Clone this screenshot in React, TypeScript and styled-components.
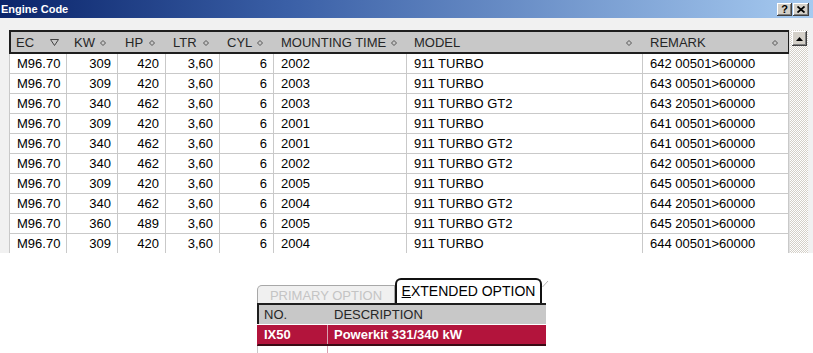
import React from 'react';
import styled, { createGlobalStyle } from 'styled-components';

const GlobalStyle = createGlobalStyle`
  html, body {
    margin: 0;
    padding: 0;
    background: #fff;
  }
  body {
    font-family: 'Liberation Sans', Arial, sans-serif;
    width: 813px;
    height: 353px;
    overflow: hidden;
  }
`;

type Col = { key: string; label: string; width: number; align: 'left' | 'right'; marker: number; sort?: boolean };

const columns: Col[] = [
  { key: 'ec', label: 'EC', width: 58, align: 'left', marker: 34, sort: true },
  { key: 'kw', label: 'KW', width: 51, align: 'right', marker: 26 },
  { key: 'hp', label: 'HP', width: 48, align: 'right', marker: 24 },
  { key: 'ltr', label: 'LTR', width: 54, align: 'right', marker: 30 },
  { key: 'cyl', label: 'CYL', width: 54, align: 'right', marker: 30 },
  { key: 'mt', label: 'MOUNTING TIME', width: 133, align: 'left', marker: 110 },
  { key: 'model', label: 'MODEL', width: 236, align: 'left', marker: 212 },
  { key: 'remark', label: 'REMARK', width: 146, align: 'left', marker: 122 },
];

const rows = [
  ['M96.70', '309', '420', '3,60', '6', '2002', '911 TURBO', '642 00501>60000'],
  ['M96.70', '309', '420', '3,60', '6', '2003', '911 TURBO', '643 00501>60000'],
  ['M96.70', '340', '462', '3,60', '6', '2003', '911 TURBO GT2', '643 20501>60000'],
  ['M96.70', '309', '420', '3,60', '6', '2001', '911 TURBO', '641 00501>60000'],
  ['M96.70', '340', '462', '3,60', '6', '2001', '911 TURBO GT2', '641 00501>60000'],
  ['M96.70', '340', '462', '3,60', '6', '2002', '911 TURBO GT2', '642 00501>60000'],
  ['M96.70', '309', '420', '3,60', '6', '2005', '911 TURBO', '645 00501>60000'],
  ['M96.70', '340', '462', '3,60', '6', '2004', '911 TURBO GT2', '644 20501>60000'],
  ['M96.70', '360', '489', '3,60', '6', '2005', '911 TURBO GT2', '645 20501>60000'],
  ['M96.70', '309', '420', '3,60', '6', '2004', '911 TURBO', '644 00501>60000'],
];

const template = columns.map((c) => `${c.width}px`).join(' ');

const App = () => {
  return (
    <>
      <GlobalStyle />
      <Window>
        {/* caption */}
        <TitleBar>
          <Title>Engine Code</Title>
          <CaptionButtons>
            <CaptionButton $w={15}>?</CaptionButton>
            <CaptionButton $w={16}>
              <svg width="8" height="7" viewBox="0 0 8 7">
                <path d="M0.5 0.5 L7.5 6.5 M7.5 0.5 L0.5 6.5" stroke="#000" strokeWidth="1.8" />
              </svg>
            </CaptionButton>
          </CaptionButtons>
        </TitleBar>

        {/* engine list */}
        <Panel>
          <Grid>
            <HeaderRow>
              {columns.map((c) => (
                <HeaderCell key={c.key} $marker={c.marker}>
                  <span>{c.label}</span>
                  {c.sort ? (
                    <svg width="9" height="7" viewBox="0 0 9 7">
                      <polygon points="0.5,0.5 8.5,0.5 4.5,6.5" fill="none" stroke="#444" />
                    </svg>
                  ) : (
                    <svg width="6" height="6" viewBox="0 0 6 6">
                      <polygon points="3,0.5 5.5,3 3,5.5 0.5,3" fill="none" stroke="#555" />
                    </svg>
                  )}
                </HeaderCell>
              ))}
            </HeaderRow>
            {rows.map((r, i) => (
              <Row key={i}>
                {r.map((v, j) => (
                  <Cell key={j} $align={columns[j].align}>
                    {v}
                  </Cell>
                ))}
              </Row>
            ))}
          </Grid>
          <ScrollBar>
            <ScrollButton>
              <svg width="7" height="4" viewBox="0 0 7 4">
                <polygon points="3.5,0 7,4 0,4" fill="#000" />
              </svg>
            </ScrollButton>
          </ScrollBar>
        </Panel>

        {/* options */}
        <Lower>
          <TabStrip>
            <Tab>PRIMARY OPTION</Tab>
            <ActiveTab>
              <u>E</u>XTENDED OPTION
            </ActiveTab>
            <TabEdge width="7" height="24" viewBox="0 0 7 24">
              <path d="M0.5 8 L6 2" stroke="#b8b8b8" strokeWidth="1" fill="none" />
            </TabEdge>
          </TabStrip>
          <OptionGrid>
            <OptionHeader>
              <OptionHeadCell>NO.</OptionHeadCell>
              <OptionHeadCell>DESCRIPTION</OptionHeadCell>
            </OptionHeader>
            <OptionRow $selected>
              <OptionCell>IX50</OptionCell>
              <OptionCell>Powerkit 331/340 kW</OptionCell>
            </OptionRow>
            <OptionRow>
              <OptionCell />
              <OptionCell />
            </OptionRow>
          </OptionGrid>
        </Lower>
      </Window>
    </>
  );
};

export default App;

const Window = styled.div`
  width: 813px;
  height: 353px;
  display: flex;
  flex-direction: column;
  overflow: hidden;
`;

const TitleBar = styled.div`
  height: 18px;
  flex: none;
  display: flex;
  align-items: center;
  justify-content: space-between;
  padding: 0 4px 0 1px;
  background: linear-gradient(to right, #0a246a 0%, #3a5fa6 35%, #a6caf0 100%);
`;

const Title = styled.span`
  color: #fff;
  font-weight: bold;
  font-size: 11px;
`;

const CaptionButtons = styled.div`
  display: flex;
  gap: 1px;
  margin-top: 1px;
`;

const CaptionButton = styled.div<{ $w: number }>`
  width: ${(p) => p.$w}px;
  height: 13px;
  box-sizing: border-box;
  background: #d4d0c8;
  box-shadow: inset -1px -1px #404040, inset 1px 1px #fff, inset -2px -2px #808080;
  display: flex;
  align-items: center;
  justify-content: center;
  font: bold 11px 'Liberation Sans', Arial, sans-serif;
  color: #000;
  line-height: 13px;
`;

const Panel = styled.div`
  height: 235px;
  flex: none;
  box-sizing: border-box;
  padding: 12px 0 0 9px;
  background: #f1f1f1;
  display: flex;
`;

const Grid = styled.div`
  width: 780px;
  height: 223px;
  overflow: hidden;
  background: #fff;
`;

const HeaderRow = styled.div`
  display: grid;
  grid-template-columns: ${template};
  height: 24px;
  background: #c8c8c8;
  box-shadow: inset 2px 2px #1e1e1e, inset -1px -2px #1e1e1e;
`;

const HeaderCell = styled.div<{ $marker: number }>`
  display: grid;
  grid-template-columns: ${(p) => p.$marker}px auto;
  align-items: center;
  justify-items: start;
  padding: 1px 0 0 7px;
  font-size: 13px;
  color: #262626;
  white-space: nowrap;

  svg {
    display: block;
  }
`;

const Row = styled.div`
  display: grid;
  grid-template-columns: ${template};
  height: 20px;
  box-sizing: border-box;
  border-bottom: 1px solid #c9c9c9;
`;

const Cell = styled.div<{ $align: 'left' | 'right' }>`
  border-right: 1px solid #c9c9c9;
  padding: 0 6px 0 7px;
  font-size: 13px;
  line-height: 19px;
  color: #000;
  text-align: ${(p) => p.$align};
  white-space: nowrap;
  overflow: hidden;

  &:first-child {
    border-left: 1px solid #c9c9c9;
  }
`;

const ScrollBar = styled.div`
  width: 19px;
  height: 223px;
  box-sizing: border-box;
  padding: 1px 0 0 2px;
  background-color: #fff;
  background-image: conic-gradient(#d4d0c8 25%, #fff 0 50%, #d4d0c8 0 75%, #fff 0);
  background-size: 2px 2px;
  border-left: 1px solid #e0e0e0;
`;

const ScrollButton = styled.div`
  width: 15px;
  height: 15px;
  background: #d4d0c8;
  box-shadow: inset -1px -1px #404040, inset 1px 1px #fff, inset -2px -2px #808080;
  display: flex;
  align-items: center;
  justify-content: center;

  svg {
    display: block;
  }
`;

const Lower = styled.div`
  flex: 1;
  padding: 25px 0 0 257px;
  background: #fff;
`;

const TabStrip = styled.div`
  display: flex;
  align-items: flex-end;
  height: 25px;
`;

const Tab = styled.div`
  width: 138px;
  height: 18px;
  box-sizing: border-box;
  border: 1px solid #a8a8a8;
  border-bottom: none;
  border-radius: 5px 0 0 0;
  background: #f0f0f0;
  color: #c4c4c4;
  font-size: 13px;
  line-height: 19px;
  text-align: center;
  white-space: nowrap;
`;

const ActiveTab = styled.div`
  width: 147px;
  height: 25px;
  box-sizing: border-box;
  border: 2px solid #111;
  border-bottom: none;
  border-radius: 6px 6px 0 0;
  background: #fff;
  color: #000;
  font-size: 14px;
  line-height: 22px;
  text-align: center;
  white-space: nowrap;
`;

const TabEdge = styled.svg`
  display: block;
`;

const OptionGrid = styled.div`
  width: 289px;
`;

const OptionHeader = styled.div`
  display: grid;
  grid-template-columns: 70px 219px;
  height: 21px;
  background: #c8c8c8;
  box-shadow: inset 2px 2px #1e1e1e;
`;

const OptionHeadCell = styled.div`
  padding: 2px 0 0 7px;
  font-size: 13px;
  line-height: 19px;
  color: #262626;
`;

const OptionRow = styled.div<{ $selected?: boolean }>`
  display: grid;
  grid-template-columns: 70px 219px;
  height: 21px;
  box-sizing: border-box;
  margin-top: ${(p) => (p.$selected ? '1px' : '0')};
  background: ${(p) => (p.$selected ? '#b3143c' : '#fff')};
  color: #fff;
  border-bottom: ${(p) => (p.$selected ? '2px solid #3a0a14' : 'none')};
  border-left: 1px solid ${(p) => (p.$selected ? '#b3143c' : '#c9c9c9')};
`;

const OptionCell = styled.div`
  padding: 0 0 0 6px;
  font-size: 13px;
  font-weight: bold;
  line-height: 19px;
  white-space: nowrap;

  &:first-child {
    border-right: 1px solid #d9a0b0;
  }
`;
